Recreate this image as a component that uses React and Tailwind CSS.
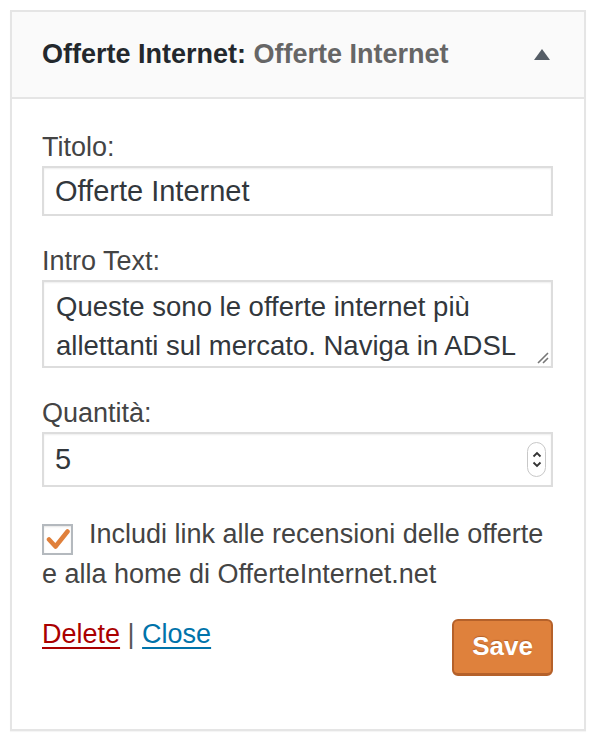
import React from 'react'

const font = { fontFamily: '"Liberation Sans", Arial, sans-serif' }

const Field = ({ label, children }) => (
  <div>
    <label className="block text-[27px] leading-[30px] text-[#444]">{label}</label>
    <div className="mt-1">{children}</div>
  </div>
)

export default function App() {
  return (
    <div className="min-h-screen bg-white pt-[10px] pl-[10px]" style={font}>
      <div className="w-[576px] border-2 border-[#e5e5e5] bg-white shadow-[0_1px_1px_rgba(0,0,0,0.04)]">
        {/* header */}
        <div className="flex h-[87px] items-center justify-between border-b-2 border-[#e5e5e5] bg-[#fafafa] pl-[30px] pr-[34px]">
          <h3 className="text-[27px] font-bold text-[#23282d]">
            Offerte Internet: <span className="text-[#666]">Offerte Internet</span>
          </h3>
          <svg width="16" height="11" viewBox="0 0 16 11">
            <path d="M8 0 L16 11 L0 11 Z" fill="#555d66" />
          </svg>
        </div>

        {/* body */}
        <div className="pl-[30px] pr-[31px] pt-[33px] pb-[53px]">
          <Field label="Titolo:">
            <input
              readOnly
              defaultValue="Offerte Internet"
              className="block h-[50px] w-full border-2 border-[#ddd] bg-white px-[11px] text-[29px] text-[#32373c] outline-none shadow-[inset_0_1px_2px_rgba(0,0,0,0.07)]"
            />
          </Field>

          <div className="mt-[30px]">
            <Field label="Intro Text:">
              <div className="relative h-[88px] overflow-hidden border-2 border-[#ddd] bg-white pl-[12px] pr-[8px] pt-[5px] text-[27.5px] leading-[39px] text-[#32373c] shadow-[inset_0_1px_2px_rgba(0,0,0,0.07)]">
                Queste sono le offerte internet più allettanti sul mercato. Naviga in ADSL
                <svg className="absolute bottom-[2px] right-[2px]" width="14" height="14" viewBox="0 0 14 14">
                  <path d="M13 3 L3 13 M13 8 L8 13" stroke="#777" strokeWidth="1.6" />
                </svg>
              </div>
            </Field>
          </div>

          <div className="mt-[30px]">
            <Field label="Quantità:">
              <div className="flex h-[55px] items-center justify-between border-2 border-[#ddd] bg-white pl-[11px] pr-[5px] text-[29px] text-[#32373c] shadow-[inset_0_1px_2px_rgba(0,0,0,0.07)]">
                <span>5</span>
                <span className="flex h-[35px] w-[19px] flex-col items-center justify-center gap-[3px] rounded-full border border-[#c8c8c8] bg-white">
                  <svg width="10" height="7" viewBox="0 0 10 7">
                    <path d="M1.5 5.5 L5 2 L8.5 5.5" fill="none" stroke="#333" strokeWidth="1.8" />
                  </svg>
                  <svg width="10" height="7" viewBox="0 0 10 7">
                    <path d="M1.5 1.5 L5 5 L8.5 1.5" fill="none" stroke="#333" strokeWidth="1.8" />
                  </svg>
                </span>
              </div>
            </Field>
          </div>

          <p className="mt-[28px] text-[27px] leading-[39px] text-[#444]">
            <span className="mr-[16px] inline-flex h-[31px] w-[31px] items-center justify-center border-2 border-[#b4b9be] bg-white align-[-7px] shadow-[inset_0_1px_2px_rgba(0,0,0,0.1)]">
              <svg width="24" height="22" viewBox="0 0 24 22">
                <path d="M3 11.5 L9.5 18.5 L21.5 3.5" fill="none" stroke="#e0803b" strokeWidth="4.5" strokeLinecap="round" strokeLinejoin="round" />
              </svg>
            </span>
            Includi link alle recensioni delle offerte e alla home di OfferteInternet.net
          </p>

          <div className="mt-[21px] flex items-start justify-between">
            <div className="text-[27px] leading-[39px] text-[#555]">
              <a href="#" className="text-[#a00] underline underline-offset-[4px]">Delete</a>
              {' | '}
              <a href="#" className="text-[#0073aa] underline underline-offset-[4px]">Close</a>
            </div>
            <button className="mt-[4px] h-[57px] w-[101px] rounded-[6px] border-2 border-b-[3px] border-[#b5612a] bg-[#df813c] text-[26px] font-bold text-white [text-shadow:0_-1px_1px_#b5612a]">
              Save
            </button>
          </div>
        </div>
      </div>
    </div>
  )
}
